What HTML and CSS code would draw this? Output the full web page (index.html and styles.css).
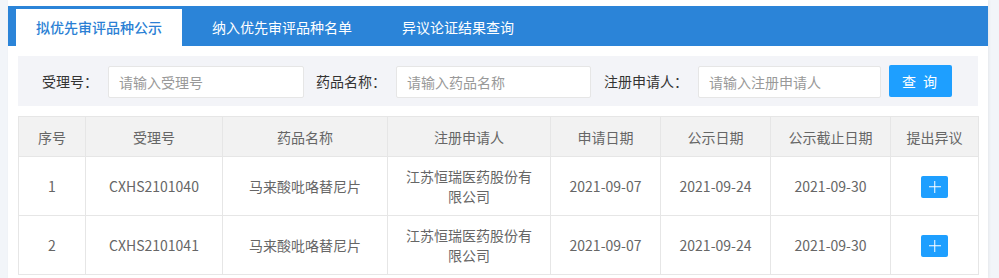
FILE: index.html
```html
<!DOCTYPE html>
<html lang="zh-CN">
<head>
<meta charset="utf-8">
<title>拟优先审评品种公示</title>
<link rel="stylesheet" href="styles.css">
</head>
<body>
<div class="panel">
  <div class="tabs">
    <div class="tab active">拟优先审评品种公示</div>
    <div class="tab">纳入优先审评品种名单</div>
    <div class="tab">异议论证结果查询</div>
  </div>
  <div class="search">
    <label class="lbl">受理号：</label>
    <input class="inp inp1" placeholder="请输入受理号">
    <label class="lbl">药品名称：</label>
    <input class="inp inp2" placeholder="请输入药品名称">
    <label class="lbl">注册申请人：</label>
    <input class="inp inp3" placeholder="请输入注册申请人">
    <button class="btn">查 询</button>
  </div>
  <table class="grid">
    <colgroup>
      <col style="width:67px"><col style="width:137px"><col style="width:165px"><col style="width:163px">
      <col style="width:110px"><col style="width:110px"><col style="width:120px"><col style="width:88px">
    </colgroup>
    <thead>
      <tr><th>序号</th><th>受理号</th><th>药品名称</th><th>注册申请人</th><th>申请日期</th><th>公示日期</th><th>公示截止日期</th><th>提出异议</th></tr>
    </thead>
    <tbody>
      <tr><td>1</td><td>CXHS2101040</td><td>马来酸吡咯替尼片</td><td>江苏恒瑞医药股份有限公司</td><td>2021-09-07</td><td>2021-09-24</td><td>2021-09-30</td><td><span class="plus"></span></td></tr>
      <tr><td>2</td><td>CXHS2101041</td><td>马来酸吡咯替尼片</td><td>江苏恒瑞医药股份有限公司</td><td>2021-09-07</td><td>2021-09-24</td><td>2021-09-30</td><td><span class="plus"></span></td></tr>
    </tbody>
  </table>
</div>
</body>
</html>
```

FILE: styles.css
```css
html, body {
  margin: 0;
  padding: 0;
  background: #f2f5f9;
  font-family: "Noto Sans CJK SC", "Noto Sans", sans-serif;
  font-size: 14px;
  color: #333;
}
.panel {
  margin-left: 8px;
  width: 980px;
  height: 278px;
  background: #fff;
  padding-top: 6px;
  box-sizing: border-box;
  box-shadow: 1px 0 3px rgba(0,0,0,0.06);
}
.tabs {
  display: flex;
  height: 40px;
  background: #2b84d8;
  padding-left: 8px;
  align-items: flex-end;
}
.tab {
  height: 37px;
  line-height: 37px;
  padding: 0 20px;
  margin-right: 10px;
  color: #fff;
  font-size: 14px;
  white-space: nowrap;
}
.tab.active {
  background: #fff;
  color: #2b7fd4;
  font-weight: 500;
}
.search {
  margin: 10px 10px 0;
  height: 50px;
  background: #f3f4f8;
  display: flex;
  align-items: center;
  padding-left: 24px;
}
.lbl {
  margin-right: 10px;
  white-space: nowrap;
  color: #333;
}
.inp {
  height: 32px;
  box-sizing: border-box;
  border: 1px solid #e6e6e6;
  border-radius: 2px;
  padding: 0 10px;
  font-family: inherit;
  font-size: 14px;
  color: #333;
  outline: none;
  background: #fff;
  margin-top: 2px;
}
.inp::placeholder { color: #999; }
.inp1 { width: 196px; margin-right: 12px; }
.inp2 { width: 195px; margin-right: 13px; }
.inp3 { width: 183px; margin-right: 8px; }
.btn {
  width: 63px;
  height: 32px;
  border: 0;
  border-radius: 2px;
  background: #1e9fff;
  color: #fff;
  font-family: inherit;
  font-size: 14px;
  letter-spacing: 2px;
  padding: 0;
}
.grid {
  margin: 10px 0 0 10px;
  width: 960px;
  table-layout: fixed;
  border-collapse: collapse;
  color: #666;
}
.grid th, .grid td {
  border: 1px solid #e6e6e6;
  text-align: center;
  font-weight: normal;
  line-height: 20px;
}
.grid th {
  background: #f2f2f2;
  height: 39px;
  padding: 0 10px;
}
.grid td {
  padding: 9px 15px;
  height: 40px;
}
.plus {
  display: inline-block;
  vertical-align: middle;
  width: 27px;
  height: 22px;
  background: #1e9fff;
  border-radius: 2px;
  position: relative;
}
.plus::before, .plus::after {
  content: "";
  position: absolute;
  background: #fff;
  left: 50%;
  top: 50%;
}
.plus::before { width: 12px; height: 1.5px; transform: translate(-50%, -50%); }
.plus::after { width: 1.5px; height: 12px; transform: translate(-50%, -50%); }
```
